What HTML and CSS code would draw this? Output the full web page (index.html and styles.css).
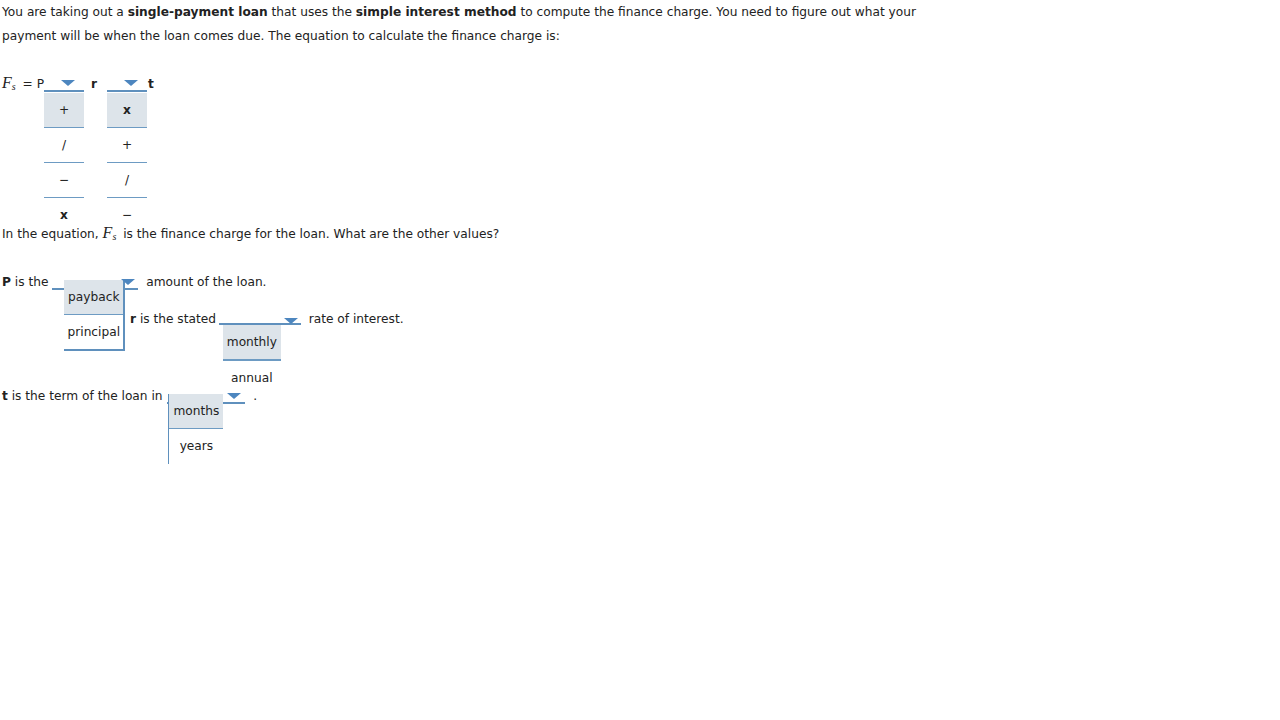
FILE: index.html
```html
<!DOCTYPE html>
<html lang="en">

<head>
    <meta charset="UTF-8">
    <title>Simple interest</title>
    <link rel="stylesheet" href="styles.css">
</head>

<body>
    <div class="question">
        <div class="intro">You are taking out a <b>single-payment loan</b> that uses the <b>simple interest method</b> to compute the finance charge. You need to figure out what your payment will be when the loan comes due. The equation to calculate the finance charge is:</div>

        <div class="equation">
            <span class="math"><i>F</i><sub>s</sub></span> = P<span class="dropdown op">
                <span class="arrow"></span>
                <span class="menu">
                    <span class="item hover">+</span>
                    <span class="item">/</span>
                    <span class="item">&minus;</span>
                    <span class="item last"><b>x</b></span>
                </span>
            </span><b class="var">r</b><span class="dropdown op">
                <span class="arrow"></span>
                <span class="menu">
                    <span class="item hover"><b>x</b></span>
                    <span class="item">+</span>
                    <span class="item">/</span>
                    <span class="item last">&minus;</span>
                </span>
            </span><b class="var last-var">t</b>
        </div>

        <div class="line">In the equation, <span class="math"><i>F</i><sub>s</sub></span> is the finance charge for the loan. What are the other values?</div>

        <div class="line row-p"><b>P</b> is the <span class="dropdown wide">
                <span class="arrow"></span>
                <span class="menu boxed-right">
                    <span class="item hover">payback</span>
                    <span class="item last">principal</span>
                </span>
            </span> amount of the loan.</div>

        <div class="line row-r"><b>r</b> is the stated <span class="dropdown rate">
                <span class="arrow"></span>
                <span class="menu">
                    <span class="item hover">monthly</span>
                    <span class="item last">annual</span>
                </span>
            </span> rate of interest.</div>

        <div class="line row-t"><b>t</b> is the term of the loan in <span class="dropdown term">
                <span class="arrow"></span>
                <span class="menu boxed-left">
                    <span class="item hover">months</span>
                    <span class="item last">years</span>
                </span>
            </span> .</div>
    </div>
</body>

</html>
```

FILE: styles.css
```css
* {
    margin: 0;
    padding: 0;
    list-style: none
}

body {
    font-family: "DejaVu Sans", Verdana, sans-serif;
    font-size: 12.2px;
    color: #222;
    background: #fff;
}

.question {
    padding: 0 0 120px 2px;
}

.intro {
    line-height: 24px;
    max-width: 925px;
}

.math {
    font-family: "Liberation Serif", serif;
    font-size: 16px;
    padding-right: 3px;
}

.math sub {
    font-size: 10px;
    font-style: italic;
    vertical-align: -2px;
}

.equation {
    margin-top: 23px;
    height: 150px;
    line-height: 24px;
}

.line {
    line-height: 24px;
}

.var {
    margin: 0 10px 0 7px;
}

.var.last-var {
    margin: 0 0 0 1px;
}

/* dropdowns */
.dropdown {
    display: inline-block;
    position: relative;
    vertical-align: top;
    border-bottom: 2px solid #5f90bd;
}

.arrow {
    position: absolute;
    width: 0;
    height: 0;
    border-top: 6px solid #4d86bf;
    border-left: 7px solid transparent;
    border-right: 7px solid transparent;
    z-index: 3;
}

.menu {
    display: block;
    position: absolute;
    left: 0;
    top: 100%;
    text-align: center;
    z-index: 2;
}

.item {
    display: block;
    height: 34px;
    line-height: 34px;
    border-bottom: 1px solid #6d9bc3;
}

.item.hover {
    background: #dde4ea;
}

.item.last {
    border-bottom: none;
}

/* equation operators */
.op {
    width: 40px;
    height: 19px;
}

.op .arrow {
    right: 9px;
    top: 9px;
}

.op .menu {
    top: 22px;
    width: 40px;
}

/* P row */
.row-p {
    margin-top: 21px;
}

.wide {
    width: 86px;
    height: 18px;
    margin-right: 4px;
}

.wide .arrow {
    right: 3px;
    top: 9px;
}

.wide .menu {
    top: 10px;
    left: 12px;
    width: 59px;
    border-right: 2px solid #5f90bd;
}

.boxed-right .item.last {
    border-bottom: 2px solid #5f90bd;
}

/* r row */
.row-r {
    margin-top: 13px;
    padding-left: 128px;
}

.rate {
    width: 82px;
    height: 16px;
    margin: 0 4px 0 -1px;
}

.rate .arrow {
    right: 3px;
    top: 11px;
}

.rate .menu {
    top: 18px;
    left: 4px;
    width: 58px;
}

.rate .item.hover {
    border-bottom: 2px solid #6d9bc3;
}

/* t row */
.row-t {
    margin-top: 53px;
}

.term {
    width: 78px;
    height: 18px;
    margin: 0 4px 0 1px;
}

.term .arrow {
    right: 4px;
    top: 9px;
}

.term .menu {
    top: 10px;
    left: 1px;
    width: 54px;
    border-left: 1px solid #5f90bd;
    padding-bottom: 1px;
}
```
